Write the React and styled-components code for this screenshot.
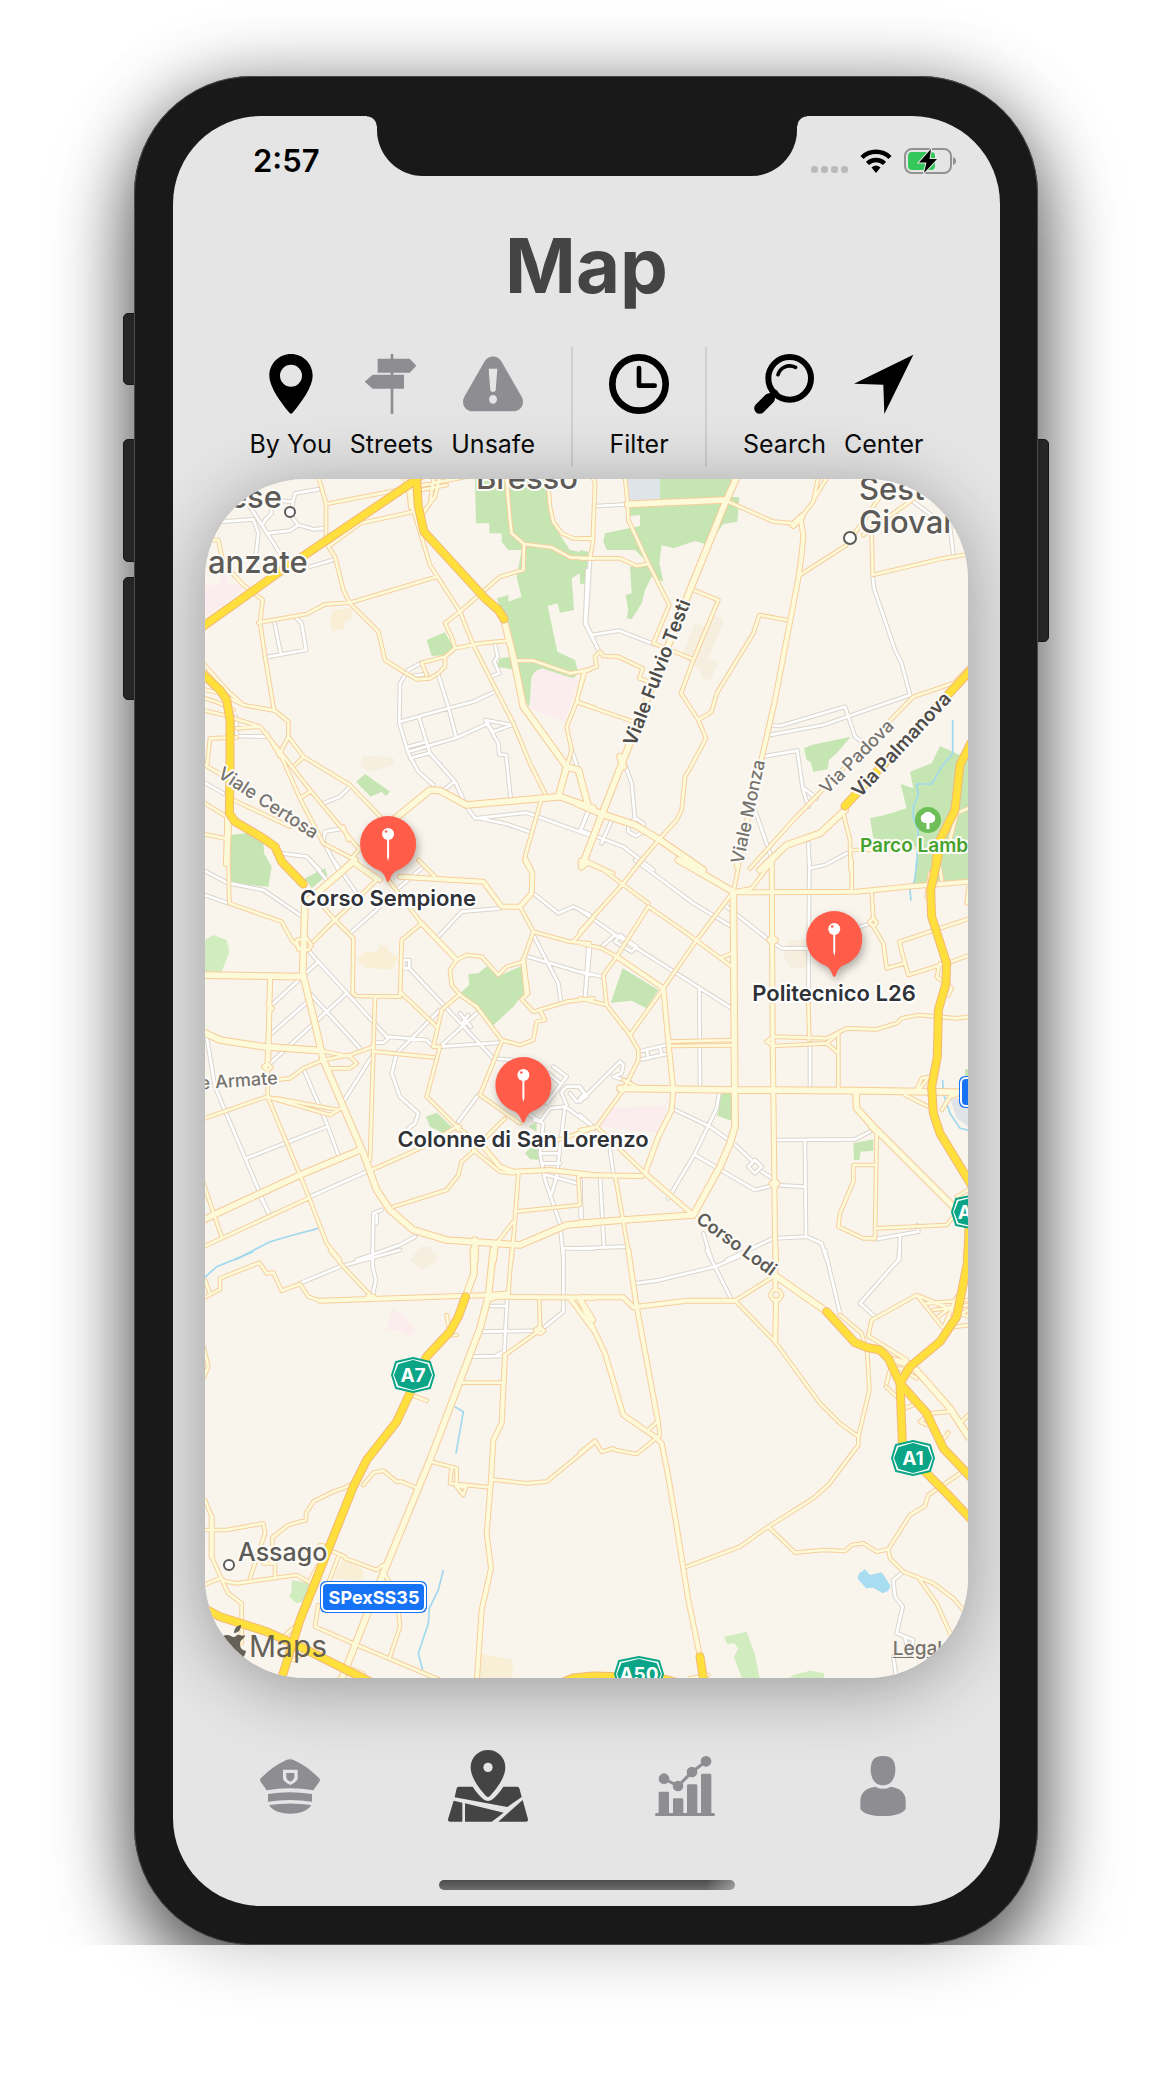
import React from "react";
import styled, { createGlobalStyle } from "styled-components";

const Global = createGlobalStyle`
  *, *::before, *::after { box-sizing: border-box; }
  body {
    margin: 0;
    background: #fff;
    font-family: Inter, "Liberation Sans", sans-serif;
    color: #000;
  }
`;

/* ---------- device ---------- */

const Page = styled.main`
  padding: 76px 130px 149px 134px;
  overflow: hidden;
`;

const Phone = styled.div`
  position: relative;
  padding: 40px 38px 39px 39px;
  border-radius: 118px;
  background: #191919;
  box-shadow: 0 0 70px rgba(0, 0, 0, 0.26);

  &::before {
    content: "";
    position: absolute;
    inset: 0;
    z-index: -1;
    border-radius: 118px;
    box-shadow: 0 36px 80px rgba(0, 0, 0, 0.62);
    clip-path: inset(-76px -130px 0 -134px);
  }

  &::after {
    content: "";
    position: absolute;
    inset: 0;
    border: 1px solid #4a4a4a;
    border-radius: 118px;
    pointer-events: none;
  }
`;

const SideKey = styled.span`
  position: absolute;
  z-index: -1;
  top: ${(p) => p.$top}px;
  ${(p) => p.$side}: -11px;
  width: 16px;
  height: ${(p) => p.$height}px;
  border-radius: 5px;
  background: #2b2b2b;
  border: 1px solid #1a1a1a;
`;

const Screen = styled.div`
  position: relative;
  display: flex;
  flex-direction: column;
  overflow: hidden;
  border-radius: 88px;
  background: #e5e5e5;
`;

const Notch = styled.div`
  position: absolute;
  top: 0;
  left: 50%;
  width: 420px;
  height: 60px;
  transform: translateX(-50%);
  border-radius: 0 0 46px 46px;
  background: #191919;

  &::before,
  &::after {
    content: "";
    position: absolute;
    top: 0;
    width: 10px;
    height: 10px;
  }
  &::before {
    right: 100%;
    background: radial-gradient(circle at 0 100%, transparent 9px, #191919 10px);
  }
  &::after {
    left: 100%;
    background: radial-gradient(circle at 100% 100%, transparent 9px, #191919 10px);
  }
`;

const StatusBar = styled.header`
  display: flex;
  align-items: center;
  justify-content: space-between;
  height: 64px;
  padding: 26px 44px 0 80px;
`;

const Clock = styled.time`
  font-size: 31px;
  font-weight: 600;
  line-height: 38px;
`;

const StatusIcons = styled.div`
  display: flex;
  align-items: center;
  gap: 12px;
`;

const Signal = styled.span`
  display: flex;
  gap: 3px;
  padding-top: 17px;

  i {
    width: 7px;
    height: 7px;
    border-radius: 3px;
    background: #b9b9b9;
  }
`;

const Title = styled.h1`
  margin: 39px 0 36px;
  color: #444;
  font-size: 76px;
  font-weight: 700;
  line-height: 92px;
  text-align: center;
`;

/* ---------- toolbar ---------- */

const Toolbar = styled.div`
  display: flex;
  justify-content: center;
  margin-bottom: 12px;
`;

const ToolGroup = styled.div`
  display: flex;
  gap: 18px;
  height: 120px;
  padding: 7px 36px 0;

  & + & {
    border-left: 2px solid #cfcfcf;
  }
`;

const Tool = styled.button`
  display: flex;
  flex-direction: column;
  align-items: center;
  gap: 15px;
  padding: 0;
  border: 0;
  background: none;
  color: ${(p) => (p.$muted ? "#8e8d92" : "#000")};
  font: inherit;
  cursor: pointer;

  svg {
    width: 60px;
    height: 60px;
  }
`;

const ToolLabel = styled.span`
  color: #0b0b0b;
  font-size: 25px;
  line-height: 30px;
  white-space: nowrap;
`;

/* ---------- map ---------- */

const MapCard = styled.section`
  position: relative;
  margin: 0 32px;
  border-radius: 100px;
  box-shadow: 0 10px 72px rgba(0, 0, 0, 0.33);
`;

const MapClip = styled.div`
  position: relative;
  overflow: hidden;
  border-radius: 100px;
  background: #f9f4ec;
`;

const MapCanvas = styled.svg`
  display: block;
  width: 100%;
  height: auto;

  text {
    font-family: Inter, "Liberation Sans", sans-serif;
  }
`;

const Marker = styled.button`
  position: absolute;
  left: calc(${(p) => p.$x} / 763 * 100%);
  top: calc(${(p) => p.$y} / 1199 * 100%);
  transform: translateX(-50%);
  display: flex;
  flex-direction: column;
  align-items: center;
  gap: 3px;
  padding: 0;
  border: 0;
  background: none;
  font: inherit;
  cursor: pointer;

  svg {
    display: block;
    width: 56px;
    height: 66px;
    overflow: visible;
    filter: drop-shadow(2px 4px 4px rgba(0, 0, 0, 0.3));
  }
`;

const MarkerLabel = styled.span`
  color: #303236;
  font-size: 22px;
  font-weight: 600;
  line-height: 26px;
  white-space: nowrap;
  -webkit-text-stroke: 4px #fff;
  paint-order: stroke fill;
`;

const Legal = styled.a`
  position: absolute;
  right: 26px;
  bottom: 17px;
  color: #77746f;
  font-size: 19px;
  font-weight: 500;
  line-height: 24px;
  text-decoration: underline;
  text-underline-offset: 2px;
`;

const Pale = "#fdfada";
const styles = {
  white: { casing: "#dad5cd", fill: "#ffffff", outer: 14, inner: 8 },
  minor: { casing: "#f6cf9e", fill: Pale, outer: 14, inner: 8 },
  major: { casing: "#f6cc98", fill: Pale, outer: 23, inner: 17 },
  motorway: { casing: "#f3b876", fill: "#ffdf3c", outer: 27, inner: 21 },
};

const GREEN = "#c5e6b3";
const LIME = "#d1edbf";
const PINK = "#fbeced";
const SAND = "#f6eedf";
const STRAW = "#f9efd7";
const SLATE = "#dfe4e9";

/* Six map sheets; every sheet is drawn in thirds of a map unit. */
const sheets = [
  {
    at: [-5, -9],
    areas: [
      [GREEN, "M825 20 1030 20 1070 180 1110 240 1160 250 1160 340 1140 310 1115 325 1122 420 1080 428 1072 400 1043 408 1072 545 1125 570 1135 610 1120 625 1010 600 995 620 988 710 970 690 945 600 890 590 900 565 930 560 915 450 890 385 925 375 925 395 965 380 950 320 965 240 925 240 905 215 905 190 868 190 868 160 828 160Z"],
      [GREEN, "M680 510 735 487 765 540 735 555 695 558Z M468 935 495 912 570 965 558 978 545 965 512 980Z M92 1095 150 1088 190 1110 192 1150 215 1190 205 1250 92 1240Z"],
      [PINK, "M1000 610 1025 595 1135 630 1095 755 990 715Z M15 345 60 345 65 310 80 320 80 340 150 345 15 440Z"],
      [STRAW, "M400 420 455 415 455 445 435 460 430 480 395 482 388 450Z"],
      [SAND, "M490 858 580 862 582 885 510 905 483 890Z"],
    ],
    white:
      "M70 155 160 148 175 190 168 250M150 110 240 250M275 115 285 70 355 58M190 160 195 150 215 130 210 90 275 95M200 190 270 182 295 165 340 178 370 175M275 140 295 165M330 290 405 268M222 450 243 555M285 440 305 460 318 540 195 562M665 578 625 600 600 640 598 760 625 850 655 905 700 945M715 615 745 710 768 800M600 755 745 715 820 695 885 665M625 845 770 803 865 760M635 618 680 612M855 750 935 765 880 785 858 755 895 820 898 853 918 855 932 985M658 745 690 850 765 935 800 1010 825 1045 980 1028 1180 1100M735 958 762 935M625 830 680 815M630 865 690 848M885 525 893 560 883 575 898 610 870 620M840 1045 920 1062 995 1088M0 930 70 970M108 740 110 798 200 800M370 1000 420 980 450 950M370 1110 375 1085 430 1075M370 1115 415 1200M245 1150 320 1160 360 1200M1115 840 1135 900M1165 1020 1140 1085M1162 300 1155 460 1180 510",
    minor:
      "M355 20 378 100 378 190 385 230 405 260 430 360 450 400 535 485 555 570 615 608 650 628 690 625 715 610 735 590 735 560 665 578 680 615M378 102 620 55 800 20M385 230 480 160 640 125M175 458 320 432 375 403 450 398 710 320M15 210 55 210 70 280 130 345 188 390 180 458 195 560 222 720M615 30 640 120 690 285 780 425 820 525 940 760 990 880 1035 970M780 425 735 460 755 500 765 535 735 560M765 535 840 520 925 512M780 425 860 355 900 320 970 300 972 225M920 30 930 150 935 190 972 222 1055 232 1110 262 1180 265M1045 50 1050 110 1060 155 1085 190 1120 205 1180 207M700 30 690 100 670 130M720 20 705 80 675 120M665 60 740 45M950 572 1000 572 1110 610 1170 600M1150 610 1130 695 1100 770 1115 840 1100 890M1130 695 1180 712M0 570 80 660 130 705 225 722 265 755 265 800 310 860 450 945 570 1070M265 800 240 850 300 985 370 1120 455 1165M0 655 60 670 130 705M0 680 60 700 100 720M0 718 70 735 180 770 260 870 330 960 430 1080 475 1135M110 775 180 770M22 880 30 805 110 802M15 885 90 930M100 990 270 1070M15 1000 80 1040 80 1170M0 1090 75 1105M310 862 285 885M300 985 330 965M455 1165 480 1135M430 1070 445 1110M1025 985 975 1160 995 1200M200 790 240 860M1140 1180 1155 1165 1165 1180 1150 1190Z",
    major:
      "M912 450 940 560 970 710 1100 890 1135 900 1165 1010M1100 890 1075 980M580 1050 690 960 720 962 800 1005 1080 980 1180 1015M85 1040 80 1180M630 40 635 110",
    motorway:
      "M-20 490 240 305 640 35 670 10M648 0 655 110 672 185 855 385 895 420 912 447M-10 595 60 660 80 690 90 750 90 900 88 1030 105 1055 190 1105 225 1130 245 1175 310 1242",
    water: "",
  },
  {
    at: [375, -9],
    areas: [
      [GREEN, "M240 25 465 25 445 80 478 82 472 155 430 162 385 225 345 213 280 235 245 225 238 280 250 335 215 320 195 360 185 400 155 448 140 445 145 420 137 375 155 370 150 290 205 280 165 240 80 240 70 215 75 190 180 168 180 135 150 138 148 105 240 100Z"],
      [GREEN, "M0 240 25 245 18 345 0 340Z M672 835 695 825 812 800 770 850 747 870 743 898 700 905 692 875 680 870Z M1080 828 1140 855 1165 850 1165 1240 1010 1240 1010 1130 880 1105 870 1045 915 1035 980 1015 962 942 1000 955 990 905 1055 880Z"],
      [SLATE, "M143 25 240 25 240 95 148 95Z"],
      [SAND, "M345 460 375 470 400 435 432 450 385 565 415 578 390 632 362 620 365 605 305 560Z"],
    ],
    white:
      "M50 108 143 103M30 270 18 460 55 540M35 495 118 482 220 522M878 320 882 355 945 540 965 580 990 675 730 765 560 797M565 765 600 768 795 710 825 800 860 825M548 860 652 842 668 955 685 1010M672 955 710 985M525 1020 575 1165M135 885 155 940 165 1050M168 1046 190 1060 190 1085 168 1098 145 1085 145 1060Z M0 1080 130 1130 220 1200M25 1025 0 1085M95 1050 65 1120M685 1120 688 1195 735 1185 800 1150M1000 95 1060 140 1110 170 1120 255",
    minor:
      "M30 0 45 40 38 220 30 265M0 205 40 205M0 265 120 265 170 288 203 282M135 20 143 100 145 150 205 280 268 405 220 520 340 568M445 95 580 155 640 160 665 140 700 95 715 20M740 25 700 90M655 318 800 225 900 80M850 195 1010 80M875 190 878 315 1090 265 1170 252M345 362 415 390 340 570 303 670 355 750 378 805 330 895 315 920 305 1020 290 1050 240 1105 160 1200M620 450 538 435 520 490 410 670 395 725 355 750M0 605 50 590 45 560 60 545 70 558 115 560 188 595 178 625 230 645M0 700 160 755M0 660 15 605M0 900 25 1005M1170 590 1120 640 1000 680 640 1050 510 1195M790 1030 810 1110 812 1200M810 1140 880 1140 1000 1132M1110 1110 1130 1030 1165 1015M0 1180 15 1170 100 1210",
    major:
      "M480 0 435 100 330 360 220 640 130 870 65 1035 5 1190M120 860 130 890M143 103 430 90M795 1020 720 1090 620 1125 540 1200M-10 1000 65 1032 165 1065 240 1110 370 1200M640 165 665 140",
    mid: "M663 150 670 200 664 260 655 325 585 690 545 865 470 1190",
    motorway:
      "M795 1008 1180 592M1172 820 1140 885 1125 1020 1075 1120 1068 1180",
    water:
      "M1118 750 1118 850 1085 890 1055 942 1010 942 1015 975 1000 1010 1000 1045 1015 1080 1010 1190",
  },
  {
    at: [-5, 381],
    areas: [
      [GREEN, "M805 342 835 340 862 318 895 348 965 318 975 395 940 440 875 500 780 400 808 375Z M678 770 710 758 755 800 730 820 690 800Z M315 55 375 25 382 45 335 85Z M985 800 1010 785 1010 815Z M975 880 995 860 1015 870 1020 900 990 898Z"],
      [LIME, "M15 240 40 225 80 240 88 275 65 335 15 335Z"],
      [STRAW, "M470 300 495 275 530 275 540 255 560 258 568 278 595 290 578 328 500 325Z"],
      [SAND, "M630 1200 660 1160 695 1160 695 1180 710 1180 710 1205 665 1230Z"],
    ],
    white:
      "M0 25 80 68 190 90 300 165M0 100 85 130M325 270 350 300 560 530 680 540 700 560M525 548 550 548 570 530M330 400 480 565M610 300 628 300 628 325 610 325ZM628 325 880 595 940 600M215 435 350 310M215 520 340 410M205 615 440 400M720 450 590 580 575 640 600 710 655 760 645 790 625 805M720 560 900 548M720 560 830 460M780 460 812 500M785 492 805 465M455 215 540 140M715 230 785 155 900 145M430 725 515 590M310 625 380 790 415 885M20 530 45 680 205 1060M180 1010 205 1055M140 895 380 800M330 1010 500 935M985 290 1170 345M1000 225 1075 370 1082 420M1165 260 1155 415M1000 100 1075 160 1120 140 1170 165M775 785 835 705M518 1200 520 1060 545 1050M530 1065 530 1090M470 1200 600 1155 645 1130M595 85 670 20M400 0 470 100M330 0 380 60M1030 790 1020 880 1035 960 1080 1090 1090 1200M1095 740 1080 860 1070 950 1055 1000M1025 880 1080 880M1025 910 1080 910M1040 945 1130 970M1095 740 1180 800M1060 620 1100 650 1040 730M1045 640 1080 670M1085 695 1100 680 1140 680 1160 710 1130 725 1110 700M1100 735 1085 700M1000 780 1020 785 1050 745 1095 740M985 760 1030 790M1140 960 1145 1080M1090 1165 1180 1165",
    minor:
      "M85 0 88 130 245 185 275 240 300 265M290 240 320 235 335 255 325 270 295 268ZM340 245 405 180 530 60M530 60 460 10M405 180 370 140M405 180 460 235 458 400 470 408 600 410 605 240 665 190M565 60 665 190 770 300 800 285 845 290 895 345 920 320 970 305 985 400 965 418 1000 455 1100 425 1180 415M770 300 750 330 755 375 780 405 830 440 905 540 960 555 1000 540 1010 485 1035 480 1020 450 1000 455M960 140 1000 215 970 300M1000 215 1110 245 1170 250M1120 245 1180 175M605 400 710 500M780 402 725 450 700 560 720 560 680 710 770 800 850 860M525 410 520 570 510 900M200 620 212 355M203 430 218 445 205 460M190 620 203 610 214 622 203 632ZM203 632 203 710 300 945 330 1020 380 1150 420 1200M0 780 200 710 390 765 430 740M230 715 415 750M220 660 270 655 310 625 370 600 450 585 520 560M525 575 700 592M375 575 450 590 470 610 450 625 390 625M0 1165 325 1015M0 940 65 1130M515 930 660 865 770 800M825 870 785 905 775 945 740 990 580 1040M905 545 840 705 960 790M915 775 830 860M955 940 945 1080 935 1200M945 1055 1140 1035 1135 950M890 1150 940 1085M655 0 705 50M820 870 900 935 940 940M765 795 780 800 775 810ZM1075 840 1180 805",
    major:
      "M465 0 315 130 308 340 340 470 370 600 430 740 490 880 530 990 570 1050 640 1110 740 1140 960 1155 1100 1095 1180 1088M0 345 305 350M0 512 60 540 190 560 365 572M0 1085 40 1065 300 945 480 870M825 1140 825 1200M885 1150 880 1200",
    mid:
      "M600 50 850 65 905 140 960 140 995 100 997 40 975 0M850 860 900 920 940 935 1050 930 1180 945M210 355 205 600M665 190 770 300M970 300 980 400M460 5 540 60",
    motorway: "",
    water: "M105 1200 210 1145 280 1125 355 1105M870 890 900 925",
  },
  {
    at: [375, 381],
    areas: [
      [GREEN, "M128 325 235 390 200 445 155 422 92 428Z M425 700 455 700 455 782 412 768Z M820 850 880 838 880 872 842 875 838 900 822 900Z M1155 628 1165 628 1165 655 1155 650Z M1010 0 1165 0 1165 60 1000 70Z"],
      [PINK, "M95 745 260 735 240 820 60 800Z"],
      [SAND, "M625 240 680 240 680 325 630 322 608 285Z"],
      [SLATE, "M1110 715 1165 715 1165 800 1130 775Z"],
    ],
    white:
      "M165 0 340 130 455 200M440 140 560 235 605 265 680 265M0 150 100 220 455 445M65 260 105 225 120 230M105 245 120 225 170 260 155 275ZM30 265 15 415M0 335 65 350M358 385 360 685M688 0 685 430M690 550 690 685M175 575 260 555M175 600 260 582M200 570 205 595M240 560 245 585M840 200 875 190M0 725 120 605 130 615 125 640 100 650 150 665M0 685 15 700 0 715M275 745 390 800 460 850 520 905M418 700 410 745 345 880 265 1015M345 885 525 990 585 975 670 980M505 920 525 900 545 920 525 940ZM545 935 585 960M585 840 825 838 870 815M675 845 678 1130M585 1135 680 1130 725 1150 740 1200M885 1138 1015 1115 1012 1095M960 1125 958 1200M90 870 100 940M60 950 72 1160M0 1165 135 1160M370 1120 395 1200M440 1200 580 1135M0 765 45 805M2 960 2 1070",
    minor:
      "M580 0 515 85 460 95M815 0 815 90M685 430 688 540M875 97 880 175 890 187 880 200 868 187 878 175M880 200 910 250 920 325 975 310 958 245 1170 175M975 310 985 345 1100 310 1170 285M560 545 580 530 740 535 800 505 890 508 950 490 965 475 1015 465 1130 475 1170 470M560 545 580 558 740 550 775 580M740 550 775 520M775 520 775 690M265 545 455 540M265 558 455 556M460 95 350 240 250 385 150 525 175 570 175 600 130 690 50 800 195 940M0 250 65 265 110 290M205 140 300 205 455 320M110 290 205 140M0 415 80 435 150 525M110 290 70 345 80 435M0 0 70 30 205 130M185 0 130 70 0 215M455 280 420 295M105 945 150 1200M890 820 885 1135 850 1135 775 1100 780 1060 820 965 820 915 885 915M890 1105 1100 1095 1120 1070M870 800 890 820M0 810 50 800M1010 690 1025 655 1055 650M1020 685 1040 660M1085 750 1110 710 1130 705M975 705 1055 745M480 0 460 95M1080 310 1070 350 1115 385 1105 405M1160 1100 1160 1200M1040 110 1050 40 1080 25 1085 60M1165 85 1160 130M130 660 180 685M585 960 595 970 585 985 572 970ZM565 240 577 228 590 240 577 252ZM1130 1010 1165 990",
    major:
      "M295 0 460 95 465 800 450 850 420 920 340 1065 130 1080 0 1090M120 685 460 690 830 692 1170 697M828 700 830 745 880 800 1120 1040",
    mid:
      "M470 97 830 95 980 80 1170 65M575 0 578 540 580 690 585 1130 588 1200M250 385 265 545 280 690 275 750 235 830 195 940 340 1065M110 290 250 385M0 945 185 948",
    motorway:
      "M1075 -15 1052 90 1055 170 1100 310 1098 370 1075 450 1072 590 1055 680 1060 760 1080 820 1180 985M1168 1100 1162 1200",
    water: "M1010 0 1005 60 990 90 993 122M1088 660 1090 700 1110 760 1140 805 1170 812",
  },
  {
    at: [-5, 771],
    areas: [
      [LIME, "M275 990 330 1000 325 1050 290 1060 268 1040 275 1020Z"],
      [PINK, "M578 175 605 195 648 240 630 262 595 240 558 242Z"],
      [STRAW, "M430 925 490 960 490 995 400 985Z M840 1210 938 1230 938 1295 840 1295Z"],
    ],
    white:
      "M300 100 420 50 600 0M518 0 518 50 528 90 518 135M1090 0 1090 185 1020 242 850 245M922 140 912 318 820 320M890 315 912 305M870 168 920 168",
    minor:
      "M390 0 430 50 515 140M0 150 60 118 60 85 178 38 200 70 220 68 245 122 300 102 325 140 360 152M15 90 30 130M935 0 925 130M870 150 925 130M1018 145 1020 240 915 315M785 398 912 398M693 635 770 655 770 710 798 712 790 735 765 705M755 655 750 700 870 712M873 688 980 700 1040 695 1180 580M645 712 605 695 590 695 550 662 520 668 490 705M460 700 430 715 400 725 340 755 318 790 318 810 265 825 217 862 217 885M15 750 35 800 35 920 75 1010 85 1030 125 1060 125 1180M0 840 80 840 190 820 195 850 150 985M0 1010 60 985 80 995 110 1000 290 975 330 998M190 940 225 940 225 980M385 890 330 990M360 885 385 890M415 920 385 1000M355 1065 345 1130 470 1185 720 1290M435 925 530 960 550 945M555 975 590 1030 600 1130 570 1220M400 905 435 920M10 290 25 350 10 385M740 195 750 255 770 255M635 435 680 452M240 1170 300 1115M280 1230 330 1200M450 1255 490 1270M1005 240 1020 230 1032 242 1020 252Z",
    major:
      "M820 0 822 70 797 140M880 0 865 140 840 235 690 630 550 970 420 1300",
    mid:
      "M360 152 870 135 925 130M870 140 1180 143M915 315 905 520 880 570 873 690 860 850 873 955 845 1080 830 1300M1110 145 1180 240M1140 145 1180 210M500 1090 460 1200M35 800 35 920M503 140 520 140",
    motorway:
      "M797 140 775 200 750 245 680 320 625 440 590 515 500 630 460 710 300 1110 240 1300M-20 1058 60 1100 200 1145 290 1185 520 1300",
    water: "M0 95 50 50 160 5M765 470 790 485 768 610M730 960 715 1020 688 1075 685 1120 655 1210 668 1260",
  },
  {
    at: [375, 771],
    areas: [
      ["#a8dcf0", "M838 970 855 958 870 975 905 967 932 1008 925 1022 908 1030 880 1013 858 1015 832 985Z"],
      [LIME, "M432 1160 500 1145 525 1215 540 1290 488 1290 462 1220 475 1195 462 1180 442 1182Z M620 1290 640 1275 690 1262 732 1270 732 1290Z"],
    ],
    white:
      "M380 0 405 50 455 150M165 100 230 92 405 50 500 10M735 0 780 190M958 0 955 30 840 160 885 200M970 965 940 990 945 1040 968 1070 950 1150 1000 1170 990 1215 975 1165M940 1220 950 1290",
    minor:
      "M235 520 240 555 170 612 105 600 100 595 65 605 45 572 0 608M465 152 580 80M465 152 585 275 625 330 720 460 780 520 835 560M570 135 580 120 597 120 606 135 597 150 580 150ZM320 950 480 890 565 830 700 745 745 705 835 585 835 560 868 420 862 310 845 250 780 195M565 830 645 908 730 900 795 903 815 885 850 880 890 905 925 898 990 795 1035 768 1045 735 1140 670M925 898 930 925 970 965 1060 1000 1120 1045 1150 1080M1020 990 1070 1060 1115 1160M865 258 875 210 1010 135 1165 200M865 258 980 330M1010 135 1090 235 1165 225M1040 160 1165 150M1060 180 1165 165M1075 200 1140 150M1090 235 1130 140M1100 210 1165 180M205 540 235 512M920 400 930 360 960 355 1010 385M918 410 950 440M975 475 1000 465M1080 580 1105 548M1040 525 1020 515 1050 490 1110 485M1140 520 1165 495M980 420 1040 480M330 1285 385 1275",
    major:
      "M590 80 740 185M1000 350 1110 475 1165 560M940 330 1000 345",
    mid:
      "M0 142 130 142 160 172 320 152 465 152M145 0 170 170 235 520M0 150 75 310 130 495 225 560 245 580 265 680 290 830 325 1050 360 1220M586 0 586 118M588 150 586 275",
    motorway:
      "M740 185 825 278 860 292 900 300 925 325 960 400 1040 490 1090 595 1180 690M1170 0 1130 200 1080 275 990 350 960 400 968 600M1020 650 1100 730 1180 815M360 1220 372 1300M-60 1300 -20 1284 40 1278 240 1284 300 1300",
    water: "",
  },
];

function Sheets({ draw }) {
  return sheets.map((s, i) => (
    <g key={i} transform={`translate(${s.at[0]} ${s.at[1]}) scale(${1 / 3})`}>
      {draw(s)}
    </g>
  ));
}

function Stroke({ kind, part, d, extra = 0 }) {
  const st = styles[kind];
  return d ? (
    <path
      d={d}
      fill="none"
      stroke={part === "casing" ? st.casing : st.fill}
      strokeWidth={(part === "casing" ? st.outer : st.inner) + extra}
      strokeLinejoin="round"
      strokeLinecap="round"
    />
  ) : null;
}

function Place({ x, y, size = 18, weight = 500, color = "#5d5b57", turn = 0, anchor = "middle", children }) {
  return (
    <text
      transform={`translate(${x} ${y}) rotate(${turn})`}
      fontSize={size}
      fontWeight={weight}
      fill={color}
      textAnchor={anchor}
      stroke="#fdfbf7"
      strokeWidth="4"
      strokeLinejoin="round"
      paintOrder="stroke"
    >
      {children}
    </text>
  );
}

function Shield({ x, y, half = 20, label }) {
  const outline = (w, h) =>
    `M${-w + 4} ${-h + 4} L0 ${-h} L${w - 4} ${-h + 4} L${w} 0 L${w - 4} ${h - 4} L0 ${h} L${-w + 4} ${h - 4} L${-w} 0Z`;
  return (
    <g transform={`translate(${x} ${y})`} strokeLinejoin="round">
      <path d={outline(half + 1, 17)} fill="#fff" stroke="#0aa586" strokeWidth="2" />
      <path d={outline(half - 2, 14)} fill="#0aa586" stroke="#0aa586" strokeWidth="2" />
      <text y="7" fontSize="19" fontWeight="700" fill="#fff" textAnchor="middle">
        {label}
      </text>
    </g>
  );
}

function CityMap() {
  return (
    <MapCanvas viewBox="0 0 763 1199" role="img" aria-label="Map of Milan">
      <Sheets draw={(s) => s.areas.map(([c, d], i) => <path key={i} d={d} fill={c} />)} />
      <Sheets draw={(s) => <path d={s.water} fill="none" stroke="#a0d9ef" strokeWidth="5" />} />
      <Sheets draw={(s) => <Stroke kind="white" part="casing" d={s.white} />} />
      <Sheets draw={(s) => <Stroke kind="white" part="fill" d={s.white} />} />
      <Sheets
        draw={(s) => (
          <>
            <Stroke kind="minor" part="casing" d={s.minor} />
            <Stroke kind="minor" part="casing" d={s.mid} extra={4} />
            <Stroke kind="major" part="casing" d={s.major} />
          </>
        )}
      />
      <Sheets
        draw={(s) => (
          <>
            <Stroke kind="minor" part="fill" d={s.minor} />
            <Stroke kind="minor" part="fill" d={s.mid} extra={4} />
            <Stroke kind="major" part="fill" d={s.major} />
          </>
        )}
      />
      <Sheets draw={(s) => <Stroke kind="motorway" part="casing" d={s.motorway} />} />
      <Sheets draw={(s) => <Stroke kind="motorway" part="fill" d={s.motorway} />} />

      <g fill="#fff" stroke="#5d5b57" strokeWidth="2">
        <circle cx="85" cy="33" r="5" />
        <circle cx="645" cy="59" r="6" />
        <circle cx="24" cy="1086" r="5" />
      </g>

      <Place x={77} y={29} size={31} anchor="end">ese</Place>
      <Place x={3} y={94} size={31} anchor="start">anzate</Place>
      <Place x={322} y={10} size={31}>Bresso</Place>
      <Place x={654} y={21} size={31} anchor="start">Sesto San</Place>
      <Place x={654} y={54} size={31} anchor="start">Giovanni</Place>
      <Place x={33} y={1082} size={25} anchor="start">Assago</Place>
      <Place x={60} y={329} turn={33} color="#77746f">Viale Certosa</Place>
      <Place x={458} y={196} turn={-69} size={19} weight={600} color="#4d4c49">Viale Fulvio Testi</Place>
      <Place x={656} y={282} turn={-45} color="#77746f">Via Padova</Place>
      <Place x={701} y={270} turn={-47} weight={600} size={19} color="#4d4c49">Via Palmanova</Place>
      <Place x={549} y={334} turn={-78} color="#77746f">Viale Monza</Place>
      <Place x={655} y={373} size={19} weight={600} color="#45a22c" anchor="start">Parco Lambro</Place>
      <Place x={73} y={605} turn={-4} anchor="end" color="#77746f">Forze Armate</Place>
      <Place x={528} y={770} turn={36} weight={600}>Corso Lodi</Place>

      <g transform="translate(723 341)">
        <circle r="13" fill="#6dbe56" />
        <path
          d="M-1.500 9 L-1.500 3 C-4 3.500 -7 2 -7 -.500 C-8 -4 -5 -6 -4 -6 C-3 -9 3 -9 4 -6 C6 -6 8 -3 7 -.500 C7 2 4 3.500 1.500 3 L1.500 9Z"
          fill="#fff"
        />
      </g>

      <Shield x={208} y={896} label="A7" />
      <Shield x={708} y={979} label="A1" />
      <Shield x={434} y={1195} half={23} label="A50" />
      <Shield x={770} y={733} half={22} label="A51" />

      <g>
        <rect x="115" y="1102" width="107" height="32" rx="6" fill="#1773f5" />
        <rect x="117" y="1104" width="103" height="28" rx="5" fill="#1773f5" stroke="#fff" strokeWidth="2" />
        <text x="169" y="1125" fontSize="18" fontWeight="700" fill="#fff" textAnchor="middle">
          SPexSS35
        </text>
        <rect x="754" y="597" width="60" height="32" rx="6" fill="#1773f5" />
        <rect x="756" y="599" width="56" height="28" rx="5" fill="#1773f5" stroke="#fff" strokeWidth="2" />
      </g>

      <g fill="#5b5750" fillOpacity=".94">
        <path d="M32 1156c3-1 5 2 8 0 0 4-5 4-5 9 0 4 2 6 6 7-1 5-4 9-7 9-3 0-4-1-6-1s-4 1-6 1c-5 0-9-8-9-14 0-7 4-11 9-11 3 0 5 2 7 2 1 0 2-1 3-2zM29 1154c0-4 3-8 7-8 0 5-3 8-7 8z" />
        <text x="44" y="1178" fontSize="30">Maps</text>
      </g>
    </MapCanvas>
  );
}

const spots = [
  { name: "Corso Sempione", x: 183, y: 337 },
  { name: "Politecnico L26", x: 629, y: 432 },
  { name: "Colonne di San Lorenzo", x: 318, y: 578 },
];

function Spot({ name, x, y }) {
  return (
    <Marker type="button" $x={x} $y={y}>
      <svg viewBox="0 0 56 66" aria-hidden="true">
        <path
          d="M28 0a28 28 0 0 1 28 28c0 13-8 22-18 26-5 2-7 6-8.500 10.500q-1.500 2.500-3 0C25 60 23 56 18 54 8 50 0 41 0 28A28 28 0 0 1 28 0z"
          fill="#ff5c49"
        />
        <path d="M27 22h2v19l-1 4-1-4z" fill="#fff" />
        <circle cx="28" cy="18" r="6" fill="#fff" />
        <circle cx="26" cy="15.500" r="1.300" fill="#ff5c49" />
      </svg>
      <MarkerLabel>{name}</MarkerLabel>
    </Marker>
  );
}

/* ---------- tab bar ---------- */

const TabBar = styled.nav`
  display: grid;
  grid-template-columns: repeat(4, 1fr);
  margin: 72px 18px 58px;
`;

const Tab = styled.a`
  display: flex;
  align-items: center;
  justify-content: center;
  height: 72px;
  color: ${(p) => (p.$active ? "#444" : "#8e8d92")};

  svg {
    width: ${(p) => (p.$active ? 80 : 60)}px;
    height: ${(p) => (p.$active ? 72 : 60)}px;
  }
`;

const HomeIndicator = styled.div`
  align-self: center;
  width: 296px;
  height: 10px;
  margin-bottom: 16px;
  border-radius: 5px;
  background: linear-gradient(100deg, rgba(229, 229, 229, 0) 90%, rgba(229, 229, 229, 0.45)),
    linear-gradient(#4c4c4c, #6c6c6c);
`;

/* ---------- icons ---------- */

const PinIcon = () => (
  <svg viewBox="0 0 180 180" fill="currentColor" aria-hidden="true">
    <path
      fillRule="evenodd"
      d="M90 0C54 0 25 29 25 65c0 34 34 80 61 112q4 5 8 0c27-32 61-78 61-112C155 29 126 0 90 0zM90 32a33 33 0 1 1 0 66 33 33 0 0 1 0-66z"
    />
  </svg>
);

const SignsIcon = () => (
  <svg viewBox="0 0 180 180" fill="currentColor" aria-hidden="true">
    <path d="M86 0h8v14h49l20 21-20 21H94v6h32v42H94v76h-8v-76H32L8 83l24-21h54v-6H47V14h39z" />
  </svg>
);

const WarningIcon = () => (
  <svg viewBox="0 0 180 180" fill="currentColor" aria-hidden="true">
    <path
      fillRule="evenodd"
      d="M65 22c11-19 39-19 50 0l61 106c11 20-2 44-25 44H29C6 172-7 148 4 128zM77 44l5 65c1 6 15 6 16 0l5-65zM90 123a12 13 0 1 0 0 26 12 13 0 0 0 0-26z"
    />
  </svg>
);

const ClockIcon = () => (
  <svg viewBox="0 0 180 180" fill="none" stroke="currentColor" strokeLinecap="round" strokeLinejoin="round" aria-hidden="true">
    <circle cx="90" cy="90" r="80" strokeWidth="20" />
    <path d="M90 42v53h47" strokeWidth="14" />
  </svg>
);

const SearchIcon = () => (
  <svg viewBox="0 0 180 180" fill="none" stroke="currentColor" strokeLinecap="round" aria-hidden="true">
    <circle cx="107" cy="73" r="64" strokeWidth="18" />
    <path d="M62 118 50 130" strokeWidth="22" />
    <path d="M46 134 17 163" strokeWidth="33" />
    <path d="M72 62c6-20 28-33 53-22" strokeWidth="11" />
  </svg>
);

const ArrowIcon = () => (
  <svg viewBox="0 0 180 180" fill="currentColor" aria-hidden="true">
    <path d="M178 2 91 180 88 92 0 89z" />
  </svg>
);

const WifiIcon = () => (
  <svg width="32" height="24" viewBox="0 0 32 24" fill="none" stroke="#000" strokeWidth="4.500" aria-hidden="true">
    <path d="M2 8.500a20 20 0 0 1 28 0" />
    <path d="M7.500 14.500a12 12 0 0 1 17 0" />
    <path d="M16 24l-4.500-5.500q4.500-4 9 0z" fill="#000" stroke="none" />
  </svg>
);

const BatteryIcon = () => (
  <svg width="52" height="26" viewBox="0 0 52 26" aria-hidden="true">
    <rect x="1" y="1" width="46" height="24" rx="7" fill="none" stroke="#929292" strokeWidth="2" />
    <path d="M49 9q3 1 3 4t-3 4z" fill="#929292" />
    <rect x="4" y="4" width="27" height="18" rx="4" fill="#34c759" />
    <path d="M27 1 15 14.500h7.500L20 25 33 11h-7.500z" fill="#000" stroke="#e5e5e5" strokeWidth="2" paintOrder="stroke" />
  </svg>
);

const CapIcon = () => (
  <svg viewBox="0 0 180 180" fill="currentColor" aria-hidden="true">
    <path
      fillRule="evenodd"
      d="M79 12q11-5 22 0c28 12 52 30 76 54q5 5 1 11l-18 26q-70-12-140 0L2 77q-4-6 1-11C27 42 51 24 79 12zM69 41v26q0 10 22 20 22-10 22-20V41zM79 51h24v13q0 7-12 13-12-6-12-13z"
    />
    <path d="M24 114q66-10 132 0v23q-66-10-132 0z" />
    <path d="M27 147q63-9 127 0c-12 19-36 26-63 26s-52-7-64-26z" />
  </svg>
);

const MapPinIcon = () => (
  <svg viewBox="0 0 240 216" fill="currentColor" aria-hidden="true">
    <path
      fillRule="evenodd"
      d="M120 0C91 0 68 23 68 52c0 32 28 66 46 86q6 6 12 0c18-20 46-54 46-86C172 23 149 0 120 0zM120 38a14 14 0 1 1 0 28 14 14 0 0 1 0-28z"
    />
    <path d="M32 110h42c9 14 20 27 32 38q14 10 28 0c12-11 23-24 32-38h42q5 0 6 5l7 26-43 30L20 142l6-27q1-5 6-5z" />
    <path d="M17 152l26 6v57H6q-7 0-6-7zM51 160l116 28-36 27H51zM224 150l16 58q1 7-6 7h-83z" />
  </svg>
);

const ChartIcon = () => (
  <svg viewBox="0 0 180 180" fill="currentColor" aria-hidden="true">
    <path d="M4 171h172q4 0 4 4.500t-4 4.500H4q-4 0-4-4.500t4-4.500zM11 111q0-4 4-4h23q4 0 4 4v62H11zM54 131q0-4 4-4h23q4 0 4 4v42H54zM96 89q0-4 4-4h23q4 0 4 4v84H96zM138 57q0-4 4-4h23q4 0 4 4v116h-31z" />
    <circle cx="27" cy="68" r="16" />
    <circle cx="69" cy="90" r="16" />
    <circle cx="111" cy="48" r="16" />
    <circle cx="153" cy="16" r="16" />
    <path d="M27 68 69 90 111 48 153 16" fill="none" stroke="currentColor" strokeWidth="9" />
  </svg>
);

const PersonIcon = () => (
  <svg viewBox="0 0 180 180" fill="currentColor" aria-hidden="true">
    <path d="M90 0c25 0 37 13 37 40 0 30-15 48-37 48S53 70 53 40C53 13 65 0 90 0z" />
    <path d="M67 92q23 13 46 0c30 4 45 20 45 42v24c-12 30-124 30-136 0v-24c0-22 15-38 45-42z" />
  </svg>
);

const toolGroups = [
  [
    { label: "By You", Icon: PinIcon },
    { label: "Streets", Icon: SignsIcon, muted: true },
    { label: "Unsafe", Icon: WarningIcon, muted: true },
  ],
  [{ label: "Filter", Icon: ClockIcon }],
  [
    { label: "Search", Icon: SearchIcon },
    { label: "Center", Icon: ArrowIcon },
  ],
];

const tabs = [
  { label: "Police", Icon: CapIcon },
  { label: "Map", Icon: MapPinIcon, active: true },
  { label: "Statistics", Icon: ChartIcon },
  { label: "Profile", Icon: PersonIcon },
];

export default function App() {
  return (
    <Page>
      <Global />
      <Phone>
        <SideKey $side="left" $top={237} $height={72} />
        <SideKey $side="left" $top={363} $height={123} />
        <SideKey $side="left" $top={501} $height={123} />
        <SideKey $side="right" $top={363} $height={203} />
        <Screen>
          <Notch />
          <StatusBar>
            <Clock>2:57</Clock>
            <StatusIcons>
              <Signal><i /><i /><i /><i /></Signal>
              <WifiIcon />
              <BatteryIcon />
            </StatusIcons>
          </StatusBar>
          <Title>Map</Title>
          <Toolbar>
            {toolGroups.map((group, i) => (
              <ToolGroup key={i}>
                {group.map(({ label, Icon, muted }) => (
                  <Tool key={label} type="button" $muted={muted}>
                    <Icon />
                    <ToolLabel>{label}</ToolLabel>
                  </Tool>
                ))}
              </ToolGroup>
            ))}
          </Toolbar>
          <MapCard>
            <MapClip>
              <CityMap />
              {spots.map((s) => (
                <Spot key={s.name} {...s} />
              ))}
              <Legal href="#legal">Legal</Legal>
            </MapClip>
          </MapCard>
          <TabBar>
            {tabs.map(({ label, Icon, active }) => (
              <Tab key={label} href={`#${label.toLowerCase()}`} aria-label={label} $active={active}>
                <Icon />
              </Tab>
            ))}
          </TabBar>
          <HomeIndicator />
        </Screen>
      </Phone>
    </Page>
  );
}
